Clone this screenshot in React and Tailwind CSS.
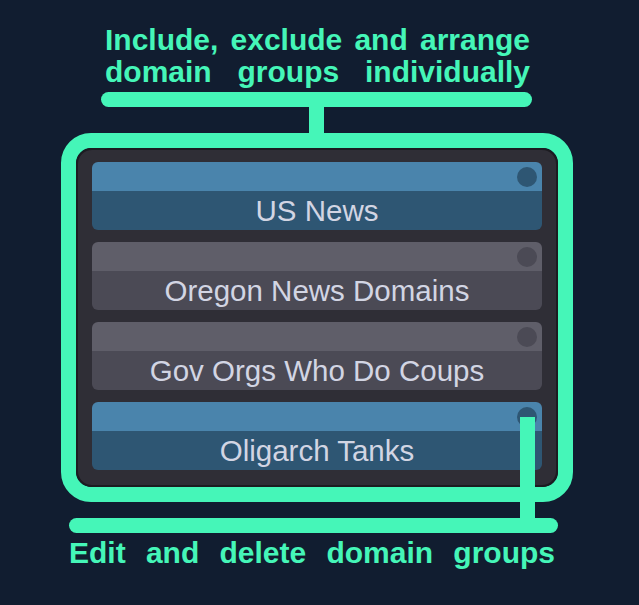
const groups = [
  { name: "US News", active: true },
  { name: "Oregon News Domains", active: false },
  { name: "Gov Orgs Who Do Coups", active: false },
  { name: "Oligarch Tanks", active: true },
];

const GroupRow = ({ group }) => {
  const top = group.active ? "bg-[#4a84ac]" : "bg-[#5f5e69]";
  const bottom = group.active ? "bg-[#2e5673]" : "bg-[#4b4a55]";
  return (
    <div className="relative h-[68px] rounded-[6px] overflow-hidden flex flex-col">
      <div className={`h-[29px] ${top}`}></div>
      <div
        className={`h-[39px] ${bottom} flex items-center justify-center text-[29.5px] leading-none text-[#d2d5e3]`}
      >
        {group.name}
      </div>
      <span
        className={`absolute top-[5px] right-[5px] w-5 h-5 rounded-full ${bottom}`}
      ></span>
    </div>
  );
};

const App = () => {
  return (
    <main
      className="relative w-[639px] h-[605px] bg-[#111d30] flex flex-col overflow-hidden"
      style={{ fontFamily: '"Liberation Sans", Arial, sans-serif' }}
    >
      <p className="mt-[24px] ml-[105px] w-[425px] text-[30px] leading-[32px] font-bold text-[#45f6b8] text-justify [text-align-last:justify]">
        Include, exclude and arrange domain groups individually
      </p>
      <div className="mt-[4px] ml-[101px] w-[431px] h-[15px] rounded-full bg-[#45f6b8]"></div>
      <div className="ml-[309px] w-[15px] h-[26px] bg-[#45f6b8]"></div>

      <div className="ml-[61px] w-[512px] border-[15px] border-[#45f6b8] rounded-[30px]">
        <div className="bg-[#2f2e36] border-2 border-[#1c1c21] rounded-[16px] px-[14px] pt-3 pb-[15px] flex flex-col gap-3">
          {groups.map((group) => (
            <GroupRow key={group.name} group={group} />
          ))}
        </div>
      </div>

      <div className="mt-[16px] ml-[69px] w-[489px] h-[15px] rounded-full bg-[#45f6b8]"></div>
      <p className="mt-[4px] ml-[69px] w-[486px] text-[30px] leading-[32px] font-bold text-[#45f6b8] text-justify [text-align-last:justify]">
        Edit and delete domain groups
      </p>

      {/* connector from the last row's button down to the bottom bar */}
      <div className="absolute left-[520px] top-[417px] w-[15px] h-[102px] bg-[#45f6b8]"></div>
    </main>
  );
};

export default App;
